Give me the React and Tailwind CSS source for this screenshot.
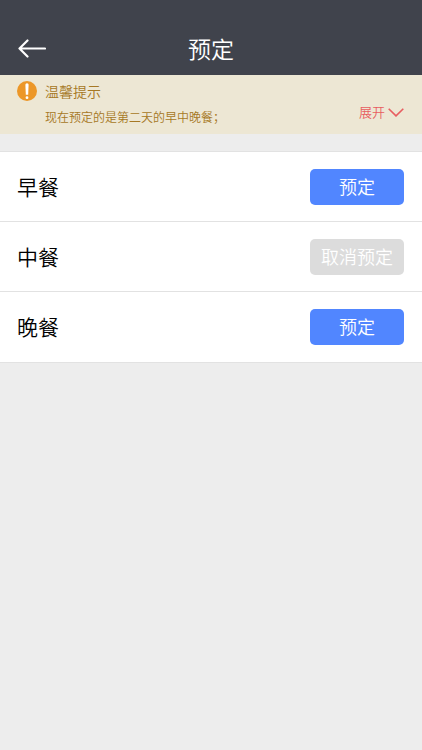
import React, { useState } from 'react';

const meals = [
    { id: 'breakfast', name: '早餐', booked: false },
    { id: 'lunch', name: '中餐', booked: true },
    { id: 'dinner', name: '晚餐', booked: false },
];

const BackArrow = () => (
    <svg viewBox="0 0 28 20" className="h-5 w-7" fill="none" stroke="currentColor" strokeWidth="2.2" strokeLinecap="round" strokeLinejoin="round" aria-hidden="true">
        <path d="M9.5 2.5 1.5 10.5l8 8M1.5 10.5H27" />
    </svg>
);

const NoticeIcon = () => (
    <svg viewBox="0 0 20 20" className="h-5 w-5 shrink-0" aria-hidden="true">
        <circle cx="10" cy="10" r="10" fill="#ec9728" />
        <path d="M8.4 3.8a1.6 1.6 0 0 1 3.2 0l-.4 10H8.8z" fill="#fff" />
        <circle cx="10" cy="16.7" r="1.4" fill="#fff" />
    </svg>
);

const Chevron = () => (
    <svg viewBox="0 0 16 10" className="h-[10px] w-4" fill="none" stroke="currentColor" strokeWidth="1.6" aria-hidden="true">
        <path d="M.7 1.7 8 8.9l7.3-7.2" />
    </svg>
);

const App = () => {
    const [list, setList] = useState(meals);

    const toggle = (id) => {
        setList(list.map((meal) => (meal.id === id ? { ...meal, booked: !meal.booked } : meal)));
    };

    return (
        <div className="min-h-screen bg-[#ededed] font-['Noto_Sans_CJK_SC',sans-serif] font-[350]">
            <header className="grid grid-cols-[1fr_auto_1fr] items-center bg-[#40434c] px-[18px] pt-6 pb-[3px] text-white">
                <button type="button" aria-label="返回" className="justify-self-start">
                    <BackArrow />
                </button>
                <h1 className="text-[23px] leading-12 font-[350]">预定</h1>
            </header>

            <section className="flex items-end justify-between bg-[#ede7d4] pt-1.5 pr-[18px] pb-2 pl-[17px]">
                <div className="flex gap-2">
                    <NoticeIcon />
                    <div className="text-[#a67824]">
                        <h2 className="text-sm leading-5 font-[350]">温馨提示</h2>
                        <p className="mt-1.5 text-xs leading-[19px]">现在预定的是第二天的早中晚餐；</p>
                    </div>
                </div>
                <button type="button" className="mb-1 flex items-center gap-[3px] text-[13px] leading-5 text-[#e85d60]">
                    展开
                    <Chevron />
                </button>
            </section>

            <ul className="mt-[17px] divide-y divide-[#e2e2e2] border-y border-[#e2e2e2] bg-white">
                {list.map((meal) => (
                    <li key={meal.id} className="flex h-[70px] items-center justify-between pr-[18px] pl-[17px]">
                        <span className="pb-0.5 text-[21px] leading-8 text-black">{meal.name}</span>
                        <button
                            type="button"
                            onClick={() => toggle(meal.id)}
                            className={`h-9 w-[94px] rounded-[5px] pb-0.5 text-lg text-white ${meal.booked ? 'bg-[#dcdcdc]' : 'bg-[#5186ff]'}`}
                        >
                            {meal.booked ? '取消预定' : '预定'}
                        </button>
                    </li>
                ))}
            </ul>
        </div>
    );
};

export default App;
